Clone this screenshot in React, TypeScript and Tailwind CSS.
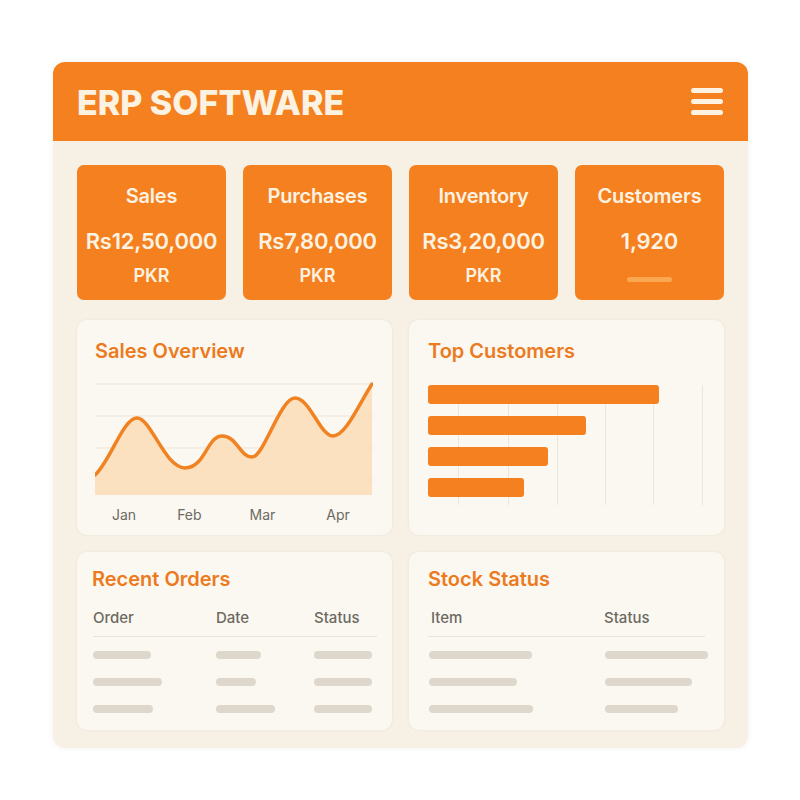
import React from 'react'

const font = { fontFamily: 'Inter, "Noto Sans", sans-serif' }

const stats = [
  { title: 'Sales', value: 'Rs12,50,000', sub: 'PKR' },
  { title: 'Purchases', value: 'Rs7,80,000', sub: 'PKR' },
  { title: 'Inventory', value: 'Rs3,20,000', sub: 'PKR' },
  { title: 'Customers', value: '1,920', sub: '' },
]

const bars = [231, 158, 120, 96]

function Pill({ w }: { w: number }) {
  return <div className="h-[8px] rounded-full bg-[#ddd7cc]" style={{ width: w }} />
}

function SalesChart() {
  const line = 'M0,103 C15,90 28,46 42,46 S70,96 90,96 S112,64 127,64 S145,85 157,85 S185,26 200,26 S225,64 238,64 S265,30 277,12'
  return (
    <svg width="278" height="124" viewBox="0 0 278 124" className="block">
      {[12, 44, 76, 108].map(y => (
        <line key={y} x1="0" x2="278" y1={y} y2={y} stroke="#ebe5da" strokeWidth="1" />
      ))}
      <path d={line + ' L277,123 L0,123 Z'} fill="#fbd9ad" fillOpacity="0.75" />
      <path d={line} fill="none" stroke="#f08222" strokeWidth="3.5" strokeLinecap="round" />
    </svg>
  )
}

export default function App() {
  return (
    <div className="w-[800px] h-[800px] bg-white pt-[62px] pl-[53px]" style={font}>
      <div className="w-[695px] h-[686px] rounded-[12px] bg-[#f6f0e5] overflow-hidden shadow-[0_0_6px_rgba(0,0,0,0.06)]">
        <div className="h-[79px] bg-[#f5801f] flex items-center justify-between pl-[24px] pr-[24px]">
          <h1 className="text-[#fbf2e2] text-[34px] font-extrabold tracking-[0px] leading-none mt-[3px]">ERP SOFTWARE</h1>
          <div className="flex flex-col gap-[6px] mr-[1px]">
            <div className="w-[32px] h-[5px] rounded-full bg-[#fbf2e2]" />
            <div className="w-[32px] h-[5px] rounded-full bg-[#fbf2e2]" />
            <div className="w-[32px] h-[5px] rounded-full bg-[#fbf2e2]" />
          </div>
        </div>

        <div className="px-[24px] pt-[24px]">
          <div className="grid grid-cols-4 gap-[17px]">
            {stats.map(s => (
              <div key={s.title} className="h-[135px] rounded-[7px] bg-[#f5801f] flex flex-col items-center text-[#fbf2e2] pt-[19px]">
                <div className="text-[20px] font-semibold leading-[24px] tracking-[-0.2px]">{s.title}</div>
                <div className="text-[22px] font-semibold leading-[28px] mt-[19px] tracking-[-0.2px]">{s.value}</div>
                {s.sub ? (
                  <div className="text-[18px] font-semibold leading-[22px] mt-[10px]">{s.sub}</div>
                ) : (
                  <div className="w-[45px] h-[5px] rounded-full bg-[#fba74f] mt-[22px]" />
                )}
              </div>
            ))}
          </div>

          <div className="grid grid-cols-2 gap-[17px] mt-[20px]">
            <div className="h-[215px] rounded-[10px] bg-[#fbf8f1] shadow-[0_0_3px_rgba(120,90,40,0.08)] px-[18px] pt-[19px]">
              <div className="text-[20px] font-semibold text-[#ec7a1e] leading-[24px]">Sales Overview</div>
              <div className="mt-[9px]">
                <SalesChart />
              </div>
              <div className="flex text-[14px] text-[#6d6a64] mt-[10px] leading-[18px]">
                <span className="ml-[17px]">Jan</span>
                <span className="ml-[41px]">Feb</span>
                <span className="ml-[48px]">Mar</span>
                <span className="ml-[51px]">Apr</span>
              </div>
            </div>

            <div className="h-[215px] rounded-[10px] bg-[#fbf8f1] shadow-[0_0_3px_rgba(120,90,40,0.08)] px-[19px] pt-[19px]">
              <div className="text-[20px] font-semibold text-[#ec7a1e] leading-[24px]">Top Customers</div>
              <div className="relative mt-[22px] h-[120px]">
                <div className="absolute inset-0 flex">
                  {[31, 50, 49, 48, 48, 49].map((w, i) => (
                    <div key={i} className="h-full border-r border-[#ece6da]" style={{ width: w }} />
                  ))}
                </div>
                <div className="relative flex flex-col gap-[12px]">
                  {bars.map((w, i) => (
                    <div key={i} className="h-[19px] rounded-[3px] bg-[#f5801f]" style={{ width: w }} />
                  ))}
                </div>
              </div>
            </div>
          </div>

          <div className="grid grid-cols-2 gap-[17px] mt-[17px]">
            <div className="h-[178px] rounded-[10px] bg-[#fbf8f1] shadow-[0_0_3px_rgba(120,90,40,0.08)] px-[15px] pt-[15px]">
              <div className="text-[20px] font-semibold text-[#ec7a1e] leading-[24px]">Recent Orders</div>
              <div className="mt-[17px] grid grid-cols-[123px_98px_1fr] text-[15px] text-[#6d6a62] font-medium leading-[20px] border-b border-[#e9e3d8] pb-[8px] ml-[1px]">
                <span>Order</span>
                <span>Date</span>
                <span>Status</span>
              </div>
              <div className="grid grid-cols-[123px_98px_1fr] gap-y-[19px] mt-[14px] ml-[1px]">
                <Pill w={58} /><Pill w={45} /><Pill w={58} />
                <Pill w={69} /><Pill w={40} /><Pill w={58} />
                <Pill w={60} /><Pill w={59} /><Pill w={58} />
              </div>
            </div>

            <div className="h-[178px] rounded-[10px] bg-[#fbf8f1] shadow-[0_0_3px_rgba(120,90,40,0.08)] px-[19px] pt-[15px]">
              <div className="text-[20px] font-semibold text-[#ec7a1e] leading-[24px]">Stock Status</div>
              <div className="mt-[17px] grid grid-cols-[176px_1fr] text-[15px] text-[#6d6a62] font-medium leading-[20px] border-b border-[#e9e3d8] pb-[8px]">
                <span className="ml-[3px]">Item</span>
                <span>Status</span>
              </div>
              <div className="grid grid-cols-[176px_1fr] gap-y-[19px] mt-[14px] ml-[1px]">
                <Pill w={103} /><Pill w={103} />
                <Pill w={88} /><Pill w={87} />
                <Pill w={104} /><Pill w={73} />
              </div>
            </div>
          </div>
        </div>
      </div>
    </div>
  )
}
